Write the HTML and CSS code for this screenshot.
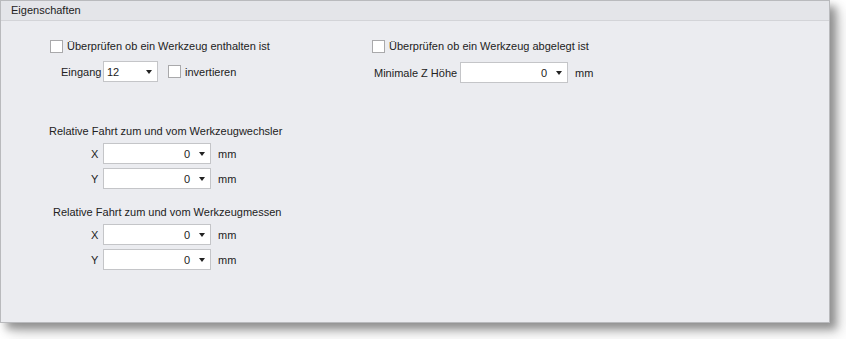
FILE: index.html
```html
<!DOCTYPE html>
<html lang="de">

    <head>
        <meta charset="UTF-8">
        <title>Eigenschaften</title>
        <link rel="stylesheet" href="styles.css">
    </head>

    <body>
        <div class="panel">
            <div class="header">Eigenschaften</div>
            <div class="content">
                <div class="col left">
                    <label class="check first">
                        <span class="box"></span>
                        <span>Überprüfen ob ein Werkzeug enthalten ist</span>
                    </label>
                    <div class="row eingang">
                        <span class="lbl">Eingang</span>
                        <div class="combo small"><span class="val left-val">12</span><span class="arrow"></span></div>
                        <label class="check inline">
                            <span class="box"></span>
                            <span>invertieren</span>
                        </label>
                    </div>

                    <div class="group g1">
                        <div class="title">Relative Fahrt zum und vom Werkzeugwechsler</div>
                        <div class="row axis">
                            <span class="ax">X</span>
                            <div class="combo"><span class="val">0</span><span class="arrow"></span></div>
                            <span class="unit">mm</span>
                        </div>
                        <div class="row axis">
                            <span class="ax">Y</span>
                            <div class="combo"><span class="val">0</span><span class="arrow"></span></div>
                            <span class="unit">mm</span>
                        </div>
                    </div>

                    <div class="group g2">
                        <div class="title t2">Relative Fahrt zum und vom Werkzeugmessen</div>
                        <div class="row axis">
                            <span class="ax">X</span>
                            <div class="combo"><span class="val">0</span><span class="arrow"></span></div>
                            <span class="unit">mm</span>
                        </div>
                        <div class="row axis">
                            <span class="ax">Y</span>
                            <div class="combo"><span class="val">0</span><span class="arrow"></span></div>
                            <span class="unit">mm</span>
                        </div>
                    </div>
                </div>

                <div class="col right">
                    <label class="check first">
                        <span class="box"></span>
                        <span>Überprüfen ob ein Werkzeug abgelegt ist</span>
                    </label>
                    <div class="row minz">
                        <span class="lbl">Minimale Z Höhe</span>
                        <div class="combo"><span class="val">0</span><span class="arrow"></span></div>
                        <span class="unit">mm</span>
                    </div>
                </div>
            </div>
        </div>
    </body>

</html>
```

FILE: styles.css
```css
* {
    margin: 0;
    padding: 0;
    box-sizing: border-box;
}

body {
    width: 846px;
    height: 339px;
    background: #fff;
    font-family: "Liberation Sans", Arial, sans-serif;
    font-size: 11px;
    color: #222;
    overflow: hidden;
}

.panel {
    width: 830px;
    height: 323px;
    background: #ebecf0;
    border: 1px solid #b9babd;
    box-shadow:
        6px 6px 8px rgba(0, 0, 0, 0.35),
        10px 10px 14px rgba(0, 0, 0, 0.15);
}

.header {
    height: 20px;
    line-height: 19px;
    padding-left: 10px;
    background: #e4e5e9;
    border-bottom: 1px solid #d3d4d8;
}

.content {
    display: flex;
    padding: 15px 0 0 49px;
}

.col.left {
    width: 321px;
}

.check {
    display: flex;
    align-items: center;
    gap: 4px;
    height: 20px;
}

.box {
    width: 13px;
    height: 13px;
    background: #fff;
    border: 1px solid #a9a9ab;
}

.row {
    display: flex;
    align-items: center;
}

.eingang {
    margin-top: 5px;
    padding-left: 11px;
}

.eingang .lbl {
    width: 42px;
}

.combo {
    display: flex;
    align-items: center;
    justify-content: flex-end;
    width: 108px;
    height: 21px;
    background: #fff;
    border: 1px solid #c4c5c8;
    padding-right: 5px;
}

.combo.small {
    width: 55px;
    justify-content: space-between;
    padding-left: 3px;
}

.val {
    margin-right: 9px;
}

.left-val {
    margin-right: 0;
}

.arrow {
    width: 0;
    height: 0;
    border-left: 3.5px solid transparent;
    border-right: 3.5px solid transparent;
    border-top: 4px solid #222;
}

.check.inline {
    margin-left: 10px;
}

.group {
    display: flex;
    flex-direction: column;
    gap: 4px;
}

.g1 {
    margin-top: 41px;
}

.g2 {
    margin-top: 15px;
}

.title {
    height: 16px;
    line-height: 16px;
    margin-left: -1px;
}

.title.t2 {
    margin-left: 3px;
}

.axis {
    padding-left: 41px;
}

.ax {
    width: 12px;
}

.unit {
    margin-left: 7px;
}

.col.right {
    padding-left: 1px;
}

.minz {
    margin-top: 6px;
    padding-left: 2px;
}

.minz .lbl {
    width: 86px;
}
```
